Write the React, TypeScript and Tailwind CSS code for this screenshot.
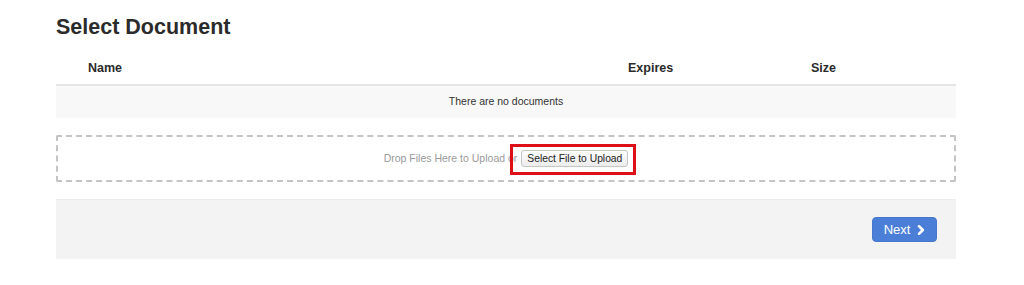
import React from "react";

export default function App() {
  return (
    <div className="w-[1024px] h-[285px] bg-white overflow-hidden" style={{ fontFamily: '"Liberation Sans", Arial, sans-serif' }}>
      <div className="ml-[56px] w-[900px] pt-[15px]">
        <h1 className="text-[21.5px] leading-[24px] font-bold text-[#2b2b2b]">Select Document</h1>

        <div className="grid grid-cols-[540px_183px_1fr] pl-[32px] pt-[21px] pb-[8px] border-b-2 border-[#e6e6e6] text-[12.5px] leading-[16px] font-bold text-[#2b2b2b]">
          <div>Name</div>
          <div>Expires</div>
          <div>Size</div>
        </div>
        <div className="h-[32px] bg-[#f8f8f8] flex items-center justify-center text-[10.5px] text-[#333]">
          There are no documents
        </div>

        <div className="mt-[17px] h-[47px] border-2 border-dashed border-[#c4c4c4] rounded-[2px] flex items-center justify-center text-[10.5px] text-[#9a9a9a]">
          <span>Drop Files Here to Upload or</span>
          <span className="relative ml-[4px] flex">
            <button className="h-[17px] px-[5px] text-[10.3px] leading-[15px] text-[#222] bg-gradient-to-b from-[#fdfdfd] to-[#ececec] border border-[#c6c6c6] rounded-[3px]">
              Select File to Upload
            </button>
            <span className="absolute -left-[11px] -right-[8px] -top-[6px] -bottom-[8px] border-[3px] border-[#dd0f17]"></span>
          </span>
        </div>

        <div className="mt-[17px] h-[60px] bg-[#f3f3f3] border-t border-[#ececec] flex items-center justify-end pr-[19px]">
          <button className="w-[65px] h-[25px] bg-[#4b7fd7] rounded-[4px] text-white text-[13px] flex items-center justify-center gap-[7px] border border-[#4577cc]">
            <span>Next</span>
            <svg width="8" height="10" viewBox="0 0 8 10">
              <path d="M2 1.2 L5.8 5 L2 8.8" fill="none" stroke="white" strokeWidth="2.6" strokeLinecap="round" strokeLinejoin="round" />
            </svg>
          </button>
        </div>
      </div>
    </div>
  );
}
